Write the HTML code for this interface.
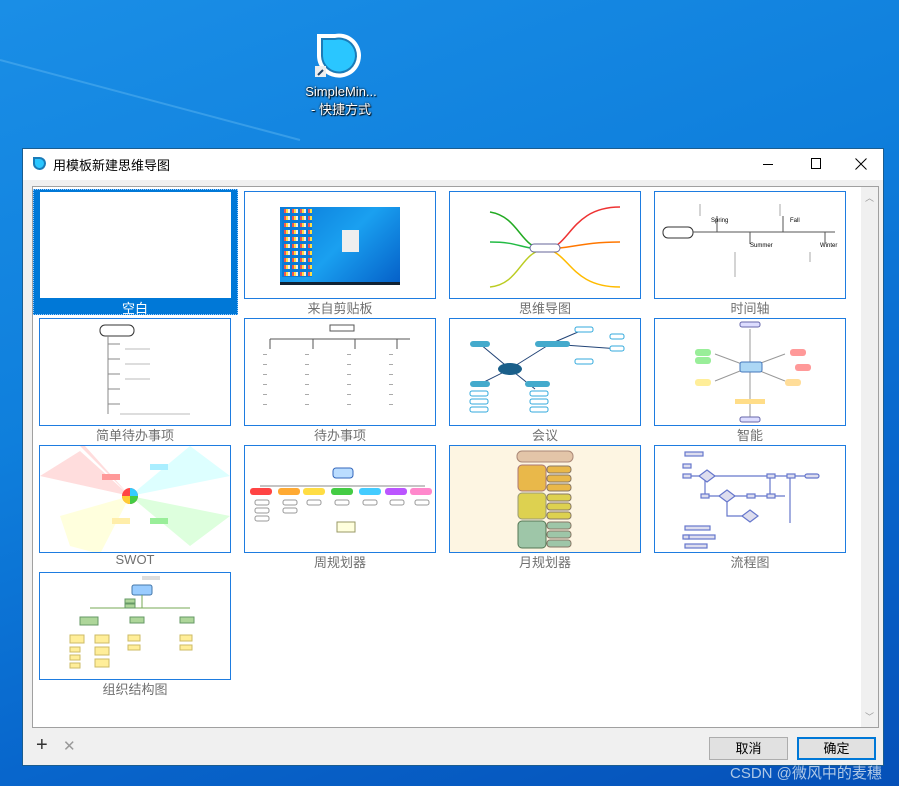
<!DOCTYPE html>
<html><head><meta charset="utf-8"><style>
*{margin:0;padding:0;box-sizing:border-box}
body{width:899px;height:786px;overflow:hidden;position:relative;font-family:"Liberation Sans","Noto Sans CJK SC",sans-serif;background:linear-gradient(160deg,#1a8ee6 0%,#0f7fdc 40%,#0866cc 70%,#0550b8 100%)}
.dlg{position:absolute;left:22px;top:148px;width:862px;height:618px;background:#f0f0f0;border:1px solid #1b5d8f}
.tb{position:absolute;left:0;top:0;width:860px;height:31px;background:#fff}
.tt{position:absolute;left:30px;top:6px;font-size:13px;color:#000}
.panel{position:absolute;left:9px;top:37px;width:847px;height:542px;background:#fff;border:1px solid #a0a0a0}
.sb{position:absolute;right:0;top:0;width:17px;height:540px;background:#f0f0f0}
.cell{position:absolute;width:192px;height:108px;border:1px solid #1e7ce0;background:#fff;overflow:hidden}
.lbl{position:absolute;width:192px;text-align:center;font-size:13px;color:#707070}
.btn{position:absolute;top:588px;width:79px;height:23px;background:#e1e1e1;border:1px solid #adadad;font-size:13px;text-align:center;line-height:21px}
</style></head><body>
<svg style="position:absolute;left:0;top:0" width="899" height="150"><path d="M0 60 L300 140" stroke="#5ab4f0" stroke-width="2" opacity=".5"/></svg>
<svg style="position:absolute;left:313px;top:32px" width="52" height="50">
<path d="M4 2 H22 A22 22 0 1 1 4 24 Z" fill="#fff"/><path d="M8 6 H22 A18 18 0 1 1 8 24 Z" fill="#1a7bb8"/><path d="M10 8 H22 A16 16 0 1 1 10 24 Z" fill="#2ac6ff"/>
<rect x="2" y="34" width="11" height="11" fill="#eee"/><path d="M5 43 L10 38" stroke="#246" stroke-width="2"/></svg>
<div style="position:absolute;left:296px;top:83px;width:90px;text-align:center;color:#fff;font-size:13px;line-height:18px;text-shadow:0 0 2px #000,1px 1px 1px #000">SimpleMin...<br>- 快捷方式</div>
<div class="dlg">
<div class="tb">
<svg style="position:absolute;left:9px;top:7px" width="14" height="16"><path d="M1 1 H7 A6.5 6.5 0 1 1 1 8Z" fill="#1a7bb8"/><path d="M3 3 H7 A4.5 4.5 0 1 1 3 8Z" fill="#2ac6ff"/></svg>
<div class="tt">用模板新建思维导图</div>
<div style="position:absolute;left:740px;top:15px;width:10px;height:1px;background:#000"></div>
<div style="position:absolute;left:788px;top:9px;width:10px;height:11px;border:1px solid #000"></div>
<svg style="position:absolute;left:832px;top:9px" width="12" height="12"><path d="M0.5 0.5 L11.5 11.5 M11.5 0.5 L0.5 11.5" stroke="#000" stroke-width="1"/></svg>
</div>
<div class="panel">
<div class="sb"><div style="position:absolute;left:4px;top:4px;font-size:9px;color:#999">︿</div><div style="position:absolute;left:4px;bottom:4px;font-size:9px;color:#999">﹀</div></div>
</div>
</div>
<!-- selected -->
<div style="position:absolute;left:33px;top:189px;width:205px;height:126px;background:#0078d7;border:1px dotted #9cf"></div>
<div style="position:absolute;left:40px;top:192px;width:191px;height:106px;background:#fff"></div>
<div class="lbl" style="left:39px;top:298px;color:#fff">空白</div>

<div class="cell" style="left:244px;top:191px"><div style="position:absolute;left:35px;top:15px;width:120px;height:76px;background:linear-gradient(135deg,#0a7ad8,#1aa0f0 50%,#0560c8)"></div><div style="position:absolute;left:37px;top:17px;width:30px;height:68px;background:repeating-linear-gradient(90deg,#0a7ad8 0 2px,#e55 2px 4px,#fd4 4px 6px,#eee 6px 8px)"></div><div style="position:absolute;left:37px;top:17px;width:30px;height:68px;background:repeating-linear-gradient(transparent 0 4px,#0a7ad8 4px 7px)"></div><div style="position:absolute;left:97px;top:38px;width:17px;height:22px;background:#eee"></div><div style="position:absolute;left:35px;top:90px;width:120px;height:3px;background:#123"></div></div>
<div class="lbl" style="left:244px;top:298px">来自剪贴板</div>

<div class="cell" style="left:449px;top:191px"><svg width="192" height="108"><g fill="none" stroke-width="1.5"><path d="M95 57 C70 57 70 25 40 20" stroke="#2a2"/><path d="M95 57 C70 57 70 50 40 50" stroke="#2b4"/><path d="M95 57 C70 60 70 92 40 95" stroke="#bc2"/><path d="M95 57 C120 57 120 15 170 15" stroke="#e33"/><path d="M95 57 C120 57 130 50 170 50" stroke="#f70"/><path d="M95 57 C120 60 120 95 170 95" stroke="#fb0"/></g><rect x="80" y="52" width="30" height="8" rx="4" fill="#fff" stroke="#669"/></svg></div>
<div class="lbl" style="left:449px;top:298px">思维导图</div>

<div class="cell" style="left:654px;top:191px"><svg width="192" height="108" font-size="6" font-family="Liberation Sans"><rect x="8" y="35" width="30" height="11" rx="5" fill="#fff" stroke="#333"/><path d="M38 40 H180 M62 40 V24 M128 40 V24 M95 40 V52 M170 40 V52" stroke="#555"/><text x="56" y="30">Spring</text><text x="135" y="30">Fall</text><text x="95" y="55">Summer</text><text x="165" y="55">Winter</text><path d="M45 12 V24 M125 12 V24 M80 60 V85 M155 60 V70" stroke="#aaa"/></svg></div>
<div class="lbl" style="left:654px;top:298px">时间轴</div>

<div class="cell" style="left:39px;top:318px"><svg width="192" height="108"><rect x="60" y="6" width="34" height="11" rx="5" fill="#fff" stroke="#333"/><path d="M68 17 V95 M68 25 H80 M68 40 H80 M68 55 H80 M68 70 H80 M68 85 H80" stroke="#888" fill="none"/><path d="M85 30 H110 M85 45 H110 M85 60 H110 M80 95 H150" stroke="#bbb"/></svg></div>
<div class="lbl" style="left:39px;top:425px">简单待办事项</div>

<div class="cell" style="left:244px;top:318px"><svg width="192" height="108"><rect x="85" y="6" width="24" height="6" fill="#fff" stroke="#555"/><path d="M25 20 H165 M25 20 V30 M68 20 V30 M110 20 V30 M152 20 V30" stroke="#555" fill="none"/><path d="M20 35 V95 M62 35 V95 M104 35 V95 M146 35 V95" stroke="#aaa" stroke-dasharray="1 9" stroke-width="4"/></svg></div>
<div class="lbl" style="left:244px;top:425px">待办事项</div>

<div class="cell" style="left:449px;top:318px"><svg width="192" height="108"><path d="M60 50 L30 25 M60 50 L100 25 M60 50 L30 65 M60 50 L85 70 M100 25 L135 10 M100 25 L170 30" stroke="#247" fill="none"/><ellipse cx="60" cy="50" rx="12" ry="6" fill="#1a5f8a"/><rect x="20" y="22" width="20" height="6" rx="3" fill="#4ac"/><rect x="85" y="22" width="35" height="6" rx="3" fill="#4ac"/><rect x="20" y="62" width="20" height="6" rx="3" fill="#4ac"/><rect x="75" y="62" width="25" height="6" rx="3" fill="#4ac"/><g fill="#fff" stroke="#3ad"><rect x="20" y="72" width="18" height="5" rx="2"/><rect x="20" y="80" width="18" height="5" rx="2"/><rect x="20" y="88" width="18" height="5" rx="2"/><rect x="80" y="72" width="18" height="5" rx="2"/><rect x="80" y="80" width="18" height="5" rx="2"/><rect x="80" y="88" width="18" height="5" rx="2"/><rect x="125" y="8" width="18" height="5" rx="2"/><rect x="160" y="15" width="14" height="5" rx="2"/><rect x="160" y="27" width="14" height="5" rx="2"/><rect x="125" y="40" width="18" height="5" rx="2"/></g></svg></div>
<div class="lbl" style="left:449px;top:425px">会议</div>

<div class="cell" style="left:654px;top:318px"><svg width="192" height="108"><g stroke="#999" fill="none"><path d="M95 48 L60 35 M95 48 L130 35 M95 48 L60 62 M95 48 L130 62 M95 48 V10 M95 48 V98"/></g><rect x="85" y="43" width="22" height="10" rx="2" fill="#acd7f5" stroke="#47b"/><rect x="40" y="30" width="16" height="7" rx="3" fill="#9e9"/><rect x="40" y="38" width="16" height="7" rx="3" fill="#9e9"/><rect x="135" y="30" width="16" height="7" rx="3" fill="#f99"/><rect x="140" y="45" width="16" height="7" rx="3" fill="#f99"/><rect x="40" y="60" width="16" height="7" rx="3" fill="#fe9"/><rect x="130" y="60" width="16" height="7" rx="3" fill="#fd9"/><rect x="85" y="3" width="20" height="5" rx="2" fill="#ddf" stroke="#66a"/><rect x="85" y="98" width="20" height="5" rx="2" fill="#ddf" stroke="#66a"/><rect x="80" y="80" width="30" height="5" fill="#fd8"/></svg></div>
<div class="lbl" style="left:654px;top:425px">智能</div>

<div class="cell" style="left:39px;top:445px"><svg width="192" height="108"><path d="M90 50 L45 0 L40 0 L90 50Z M90 50 L40 5 L0 30 Z" fill="#fdd"/><path d="M90 50 L150 0 L190 30Z" fill="#dff"/><path d="M90 50 L30 100 L60 108 Z M90 50 L20 70 L30 100Z" fill="#ffd"/><path d="M90 50 L150 100 L190 70Z" fill="#dfd"/><circle cx="90" cy="50" r="8" fill="#f44"/><path d="M90 50 H98 A8 8 0 0 1 90 58Z" fill="#4c4"/><path d="M90 50 V42 A8 8 0 0 1 98 50Z" fill="#3cf"/><path d="M90 50 V58 A8 8 0 0 1 82 50Z" fill="#fc3"/><rect x="62" y="28" width="18" height="6" fill="#f99"/><rect x="110" y="18" width="18" height="6" fill="#aef"/><rect x="72" y="72" width="18" height="6" fill="#fea"/><rect x="110" y="72" width="18" height="6" fill="#9e9"/></svg></div>
<div class="lbl" style="left:39px;top:552px">SWOT</div>

<div class="cell" style="left:244px;top:445px"><svg width="192" height="108"><rect x="88" y="22" width="20" height="10" rx="3" fill="#bdf" stroke="#36b"/><path d="M15 40 H180" stroke="#888"/><g stroke-width=".8"><rect x="5" y="42" width="22" height="7" rx="3" fill="#f44"/><rect x="33" y="42" width="22" height="7" rx="3" fill="#fa3"/><rect x="58" y="42" width="22" height="7" rx="3" fill="#fd4"/><rect x="86" y="42" width="22" height="7" rx="3" fill="#4c4"/><rect x="114" y="42" width="22" height="7" rx="3" fill="#4cf"/><rect x="140" y="42" width="22" height="7" rx="3" fill="#b5f"/><rect x="165" y="42" width="22" height="7" rx="3" fill="#f8c"/></g><g fill="#fff" stroke="#999"><rect x="10" y="54" width="14" height="5" rx="2"/><rect x="10" y="62" width="14" height="5" rx="2"/><rect x="10" y="70" width="14" height="5" rx="2"/><rect x="38" y="54" width="14" height="5" rx="2"/><rect x="38" y="62" width="14" height="5" rx="2"/><rect x="62" y="54" width="14" height="5" rx="2"/><rect x="90" y="54" width="14" height="5" rx="2"/><rect x="118" y="54" width="14" height="5" rx="2"/><rect x="145" y="54" width="14" height="5" rx="2"/><rect x="170" y="54" width="14" height="5" rx="2"/></g><rect x="92" y="76" width="18" height="10" fill="#ffd" stroke="#996"/></svg></div>
<div class="lbl" style="left:244px;top:552px">周规划器</div>

<div class="cell" style="left:449px;top:445px;background:#fdf5e2"><svg width="192" height="108"><rect x="67" y="5" width="56" height="11" rx="5" fill="#e3c5a8" stroke="#a87"/><rect x="68" y="19" width="28" height="26" rx="4" fill="#e9b84a" stroke="#a77"/><rect x="68" y="47" width="28" height="26" rx="4" fill="#ddd150" stroke="#997"/><rect x="68" y="75" width="28" height="27" rx="4" fill="#9ec6a8" stroke="#575"/><g stroke="#876"><rect x="97" y="20" width="24" height="7" rx="3" fill="#e9b84a"/><rect x="97" y="29" width="24" height="7" rx="3" fill="#e9b84a"/><rect x="97" y="38" width="24" height="7" rx="3" fill="#e9b84a"/><rect x="97" y="48" width="24" height="7" rx="3" fill="#ddd150"/><rect x="97" y="57" width="24" height="7" rx="3" fill="#ddd150"/><rect x="97" y="66" width="24" height="7" rx="3" fill="#ddd150"/><rect x="97" y="76" width="24" height="7" rx="3" fill="#9ec6a8"/><rect x="97" y="85" width="24" height="7" rx="3" fill="#9ec6a8"/><rect x="97" y="94" width="24" height="7" rx="3" fill="#9ec6a8"/></g></svg></div>
<div class="lbl" style="left:449px;top:552px">月规划器</div>

<div class="cell" style="left:654px;top:445px"><svg width="192" height="108"><g stroke="#67c" fill="#dde" stroke-width="1.2"><path d="M30 30 H160 M50 30 V50 M50 50 H130 M115 30 V50 M135 30 V77 M72 50 V70 H95" fill="none"/><rect x="30" y="6" width="18" height="4"/><rect x="28" y="18" width="8" height="4"/><rect x="28" y="28" width="8" height="4"/><path d="M52 24 L60 30 52 36 44 30Z"/><rect x="112" y="28" width="8" height="4"/><rect x="132" y="28" width="8" height="4"/><rect x="150" y="28" width="14" height="4" rx="2"/><rect x="46" y="48" width="8" height="4"/><path d="M72 44 L80 50 72 56 64 50Z"/><rect x="92" y="48" width="8" height="4"/><rect x="112" y="48" width="8" height="4"/><path d="M95 64 L103 70 95 76 87 70Z"/><rect x="30" y="80" width="25" height="4"/><rect x="30" y="89" width="30" height="4"/><rect x="30" y="98" width="22" height="4"/><rect x="28" y="89" width="6" height="4"/></g></svg></div>
<div class="lbl" style="left:654px;top:552px">流程图</div>

<div class="cell" style="left:39px;top:572px"><svg width="192" height="108"><rect x="102" y="3" width="18" height="4" fill="#ddd"/><rect x="92" y="12" width="20" height="10" rx="2" fill="#9cf" stroke="#47a"/><path d="M50 35 H150 M102 22 V35" stroke="#7a5"/><g fill="#aed69a" stroke="#696"><rect x="85" y="26" width="10" height="4"/><rect x="85" y="31" width="10" height="4"/><rect x="40" y="44" width="18" height="8"/><rect x="90" y="44" width="14" height="6"/><rect x="140" y="44" width="14" height="6"/></g><g fill="#fe9" stroke="#cb6"><rect x="30" y="62" width="14" height="8"/><rect x="55" y="62" width="14" height="8"/><rect x="30" y="74" width="10" height="5"/><rect x="30" y="82" width="10" height="5"/><rect x="30" y="90" width="10" height="5"/><rect x="55" y="74" width="14" height="8"/><rect x="55" y="86" width="14" height="8"/><rect x="88" y="62" width="12" height="6"/><rect x="88" y="72" width="12" height="5"/><rect x="140" y="62" width="12" height="6"/><rect x="140" y="72" width="12" height="5"/></g></svg></div>
<div class="lbl" style="left:39px;top:679px">组织结构图</div>

<div style="position:absolute;left:36px;top:735px;font-size:20px;color:#333;line-height:20px">+</div>
<div style="position:absolute;left:63px;top:737px;font-size:15px;color:#999">✕</div>
<div class="btn" style="left:709px;top:737px">取消</div>
<div class="btn" style="left:797px;top:737px;border:2px solid #0078d7;line-height:19px">确定</div>
<div style="position:absolute;left:730px;top:762px;font-size:15px;color:#cde;opacity:.85">CSDN @微风中的麦穗</div>
</body></html>
